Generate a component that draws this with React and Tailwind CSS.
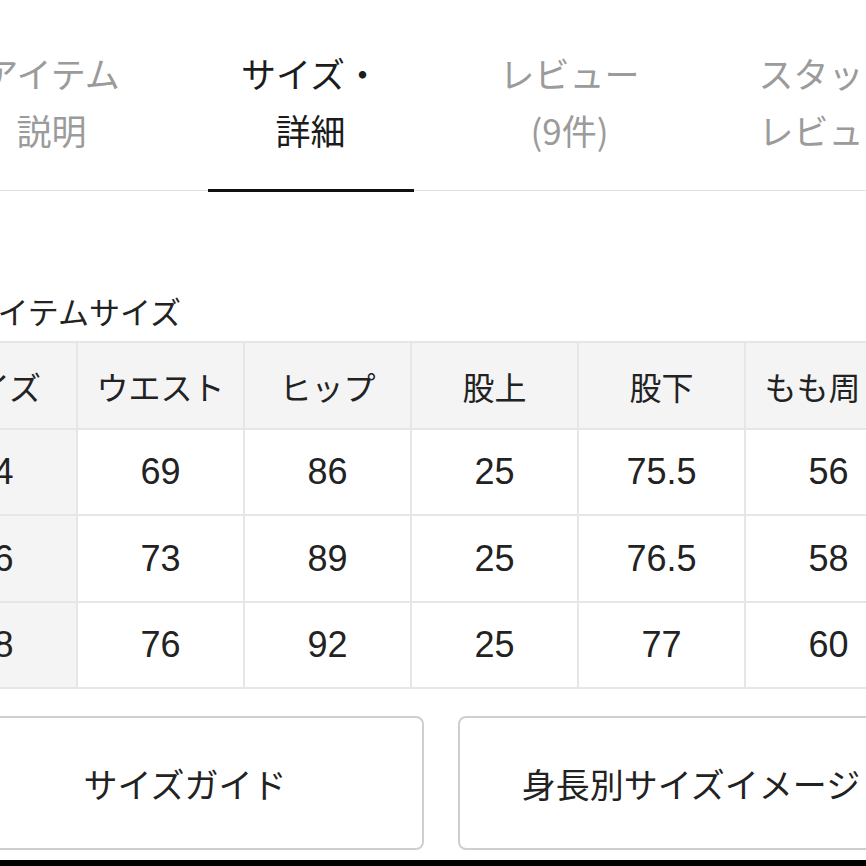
import React from "react";

const tabs = [
    { top: "アイテム", bottom: "説明", active: false },
    { top: "サイズ・", bottom: "詳細", active: true },
    { top: "レビュー", bottom: "(9件)", active: false },
    { top: "スタッフ", bottom: "レビュー", active: false },
];

const headers = ["サイズ", "ウエスト", "ヒップ", "股上", "股下", "もも周り"];

const rows = [
    { h: "h-[86px]", cells: ["64", "69", "86", "25", "75.5", "56"] },
    { h: "h-[87px]", cells: ["66", "73", "89", "25", "76.5", "58"] },
    { h: "h-[86px]", cells: ["68", "76", "92", "25", "77", "60"] },
];

const App = () => {
    return (
        <div
            className="w-[866px] h-[866px] overflow-hidden bg-white flex flex-col"
            style={{ fontFamily: '"Noto Sans CJK JP", "Noto Sans", sans-serif' }}
        >
            {/* tabs */}
            <div className="flex ml-[-78px] border-b border-[#e2e2e2] shrink-0">
                {tabs.map((tab) => (
                    <div key={tab.top} className="w-[259px] shrink-0 flex flex-col items-center pt-[44px]">
                        <div
                            className={
                                tab.active
                                    ? "text-[35px] leading-[57px] text-center text-[#1c1c1c] whitespace-nowrap"
                                    : "text-[35px] leading-[57px] text-center text-[#9b9b9b] whitespace-nowrap"
                            }
                        >
                            <div>{tab.top}</div>
                            <div>{tab.bottom}</div>
                        </div>
                        <div
                            className={
                                tab.active
                                    ? "mt-[31px] -mb-[2px] h-[3px] w-[206px] bg-[#111]"
                                    : "mt-[31px] -mb-[2px] h-[3px] w-[206px]"
                            }
                        ></div>
                    </div>
                ))}
            </div>

            {/* item size */}
            <h2 className="mt-[100px] ml-[-32px] text-[31px] leading-[40px] text-[#222] whitespace-nowrap shrink-0">
                アイテムサイズ
            </h2>

            <table className="mt-[10px] ml-[-91px] border-collapse table-fixed shrink-0 w-[1002px] text-[32px] text-[#222]">
                <thead>
                    <tr className="h-[87px] bg-[#f4f4f4]">
                        {headers.map((h) => (
                            <th
                                key={h}
                                className="w-[167px] border-2 border-[#e6e6e6] font-normal text-center whitespace-nowrap"
                            >
                                {h}
                            </th>
                        ))}
                    </tr>
                </thead>
                <tbody>
                    {rows.map((row) => (
                        <tr key={row.cells[0]} className={row.h}>
                            {row.cells.map((cell, i) => (
                                <td
                                    key={i}
                                    className={
                                        i === 0
                                            ? "border-2 border-[#e6e6e6] bg-[#f4f4f4] text-center text-[36px] font-['Liberation_Sans',sans-serif]"
                                            : "border-2 border-[#e6e6e6] bg-white text-center text-[36px] font-['Liberation_Sans',sans-serif]"
                                    }
                                >
                                    {cell}
                                </td>
                            ))}
                        </tr>
                    ))}
                </tbody>
            </table>

            {/* buttons */}
            <div className="mt-[27px] ml-[-54px] flex gap-[34px] shrink-0">
                <button className="w-[478px] h-[134px] shrink-0 border-2 border-[#cfcfcf] rounded-[8px] bg-white text-[34px] text-[#222] whitespace-nowrap">
                    サイズガイド
                </button>
                <button className="w-[478px] h-[134px] shrink-0 border-2 border-[#cfcfcf] rounded-[8px] bg-white text-[34px] text-[#222] whitespace-nowrap pr-[12px]">
                    身長別サイズイメージ
                </button>
            </div>

            <div className="mt-[10px] h-[8px] bg-black shrink-0"></div>
        </div>
    );
};

export default App;
